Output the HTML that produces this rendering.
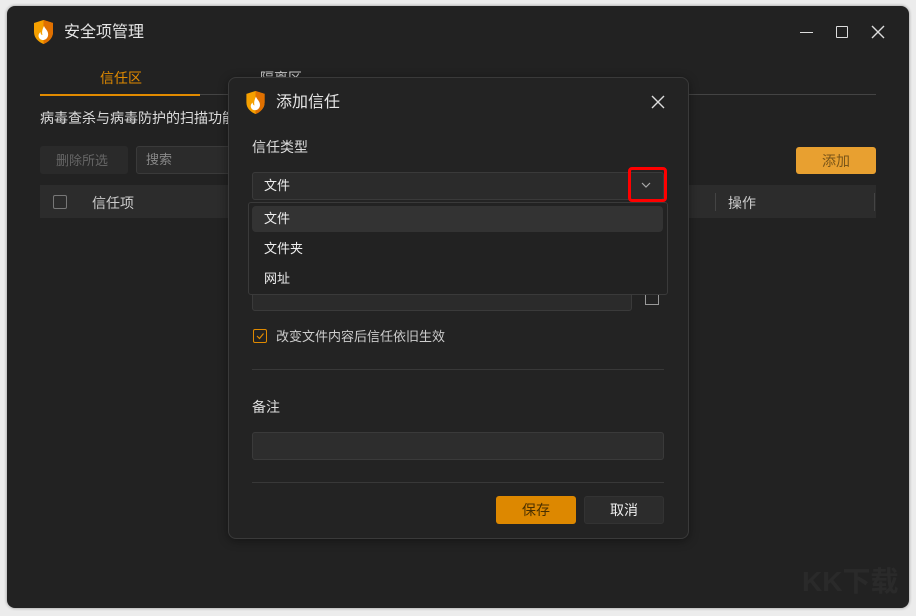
<!DOCTYPE html>
<html><head><meta charset="utf-8"><style>
*{margin:0;padding:0;box-sizing:border-box}
body{width:916px;height:616px;background:#ececec;font-family:"Liberation Sans","Noto Sans CJK SC",sans-serif;position:relative;overflow:hidden}
.a{position:absolute}
.win{left:7px;top:6px;width:902px;height:602px;background:#222;border-radius:8px;box-shadow:0 0 3px rgba(0,0,0,.4)}
.t{white-space:nowrap;line-height:1}
</style></head><body>
<div class="a win"></div>
<svg class="a" style="left:34px;top:20px" width="19" height="24" viewBox="0 0 19 24"><path d="M9.5 0L19 3v9c0 6-4.5 10-9.5 12C4.5 22 0 18 0 12V3z" fill="#f5a000"/><path d="M9.5 0L19 3v9c0 6-4.5 10-9.5 12z" fill="#e07000"/><path d="M10 6c1 3 5 5 4 10-1 3-3 4-5 4s-4-1-4.5-4c0-2 1-3 2-4 0 2 1 3 2 3-1-3 0-6 1.5-9z" fill="#fff"/></svg>
<div class="a t" style="left:64px;top:25px;font-size:16px;color:#e6e6e6">安全项管理</div>
<div class="a" style="left:800px;top:32px;width:13px;height:1px;background:#ddd"></div>
<div class="a" style="left:836px;top:26px;width:12px;height:12px;border:1.5px solid #ddd;border-radius:1px"></div>
<svg class="a" style="left:871px;top:25px" width="14" height="14"><path d="M1 1L13 13M13 1L1 13" stroke="#ddd" stroke-width="1.4"/></svg>
<div class="a t" style="left:100px;top:71px;font-size:14px;color:#e08a00">信任区</div>
<div class="a t" style="left:260px;top:71px;font-size:14px;color:#ccc">隔离区</div>
<div class="a" style="left:40px;top:94px;width:836px;height:1px;background:#444"></div>
<div class="a" style="left:40px;top:94px;width:160px;height:2px;background:#e08a00"></div>
<div class="a t" style="left:40px;top:111px;font-size:14px;color:#ddd">病毒查杀与病毒防护的扫描功能</div>
<div class="a" style="left:40px;top:146px;width:88px;height:28px;background:#2a2a2a;border-radius:3px"></div>
<div class="a t" style="left:56px;top:154px;font-size:13px;color:#666">删除所选</div>
<div class="a" style="left:136px;top:146px;width:120px;height:28px;background:#2b2b2b;border:1px solid #3a3a3a;border-radius:3px"></div>
<div class="a t" style="left:146px;top:153px;font-size:13px;color:#888">搜索</div>
<div class="a" style="left:796px;top:147px;width:80px;height:27px;background:#e8a030;border-radius:3px"></div>
<div class="a t" style="left:822px;top:154px;font-size:14px;color:#7a5518">添加</div>
<div class="a" style="left:40px;top:185px;width:836px;height:33px;background:#2c2c2c"></div>
<div class="a" style="left:53px;top:195px;width:14px;height:14px;border:1px solid #777;border-radius:2px"></div>
<div class="a t" style="left:92px;top:196px;font-size:14px;color:#ccc">信任项</div>
<div class="a" style="left:715px;top:193px;width:1px;height:18px;background:#444"></div>
<div class="a" style="left:874px;top:193px;width:1px;height:18px;background:#444"></div>
<div class="a t" style="left:728px;top:196px;font-size:14px;color:#ccc">操作</div>
<div class="a" style="left:228px;top:77px;width:461px;height:462px;background:#232323;border:1px solid #3a3a3a;border-radius:8px;box-shadow:0 2px 10px rgba(0,0,0,.4)"></div>
<svg class="a" style="left:246px;top:91px" width="19" height="23" viewBox="0 0 19 24"><path d="M9.5 0L19 3v9c0 6-4.5 10-9.5 12C4.5 22 0 18 0 12V3z" fill="#f5a000"/><path d="M9.5 0L19 3v9c0 6-4.5 10-9.5 12z" fill="#e07000"/><path d="M10 6c1 3 5 5 4 10-1 3-3 4-5 4s-4-1-4.5-4c0-2 1-3 2-4 0 2 1 3 2 3-1-3 0-6 1.5-9z" fill="#fff"/></svg>
<div class="a t" style="left:276px;top:95px;font-size:16px;color:#e6e6e6">添加信任</div>
<svg class="a" style="left:651px;top:95px" width="14" height="14"><path d="M1 1L13 13M13 1L1 13" stroke="#ddd" stroke-width="1.4"/></svg>
<div class="a t" style="left:252px;top:140px;font-size:14px;color:#ddd">信任类型</div>
<div class="a" style="left:252px;top:172px;width:412px;height:28px;background:#2b2b2b;border:1px solid #3a3a3a;border-radius:3px"></div>
<div class="a t" style="left:264px;top:179px;font-size:13px;color:#eee">文件</div>
<svg class="a" style="left:641px;top:182px" width="10" height="7"><path d="M1 1L5 5L9 1" stroke="#aaa" fill="none" stroke-width="1.2"/></svg>
<div class="a" style="left:628px;top:167px;width:39px;height:35px;border:3px solid #f00;border-radius:4px"></div>
<div class="a" style="left:252px;top:270px;width:380px;height:41px;background:#2b2b2b;border:1px solid #3a3a3a;border-radius:3px"></div>
<div class="a" style="left:645px;top:293px;width:14px;height:12px;border:1.5px solid #999"></div>
<div class="a" style="left:248px;top:202px;width:420px;height:93px;background:#222;border:1px solid #3a3a3a;border-radius:3px"></div>
<div class="a" style="left:252px;top:206px;width:411px;height:26px;background:#333;border-radius:4px"></div>
<div class="a t" style="left:264px;top:212px;font-size:13px;color:#eee">文件</div>
<div class="a t" style="left:264px;top:242px;font-size:13px;color:#eee">文件夹</div>
<div class="a t" style="left:264px;top:272px;font-size:13px;color:#eee">网址</div>
<div class="a" style="left:253px;top:329px;width:14px;height:14px;border:1px solid #e08a00;border-radius:2px"></div>
<svg class="a" style="left:255px;top:331px" width="10" height="10"><path d="M2 5L4.5 7.5L8.5 2.5" stroke="#e08a00" fill="none" stroke-width="1.2"/></svg>
<div class="a t" style="left:276px;top:330px;font-size:13px;color:#ccc">改变文件内容后信任依旧生效</div>
<div class="a" style="left:252px;top:369px;width:412px;height:1px;background:#383838"></div>
<div class="a t" style="left:252px;top:400px;font-size:14px;color:#ddd">备注</div>
<div class="a" style="left:252px;top:432px;width:412px;height:28px;background:#2d2d2d;border:1px solid #3a3a3a;border-radius:3px"></div>
<div class="a" style="left:252px;top:482px;width:412px;height:1px;background:#383838"></div>
<div class="a" style="left:496px;top:496px;width:80px;height:28px;background:#dd8800;border-radius:3px"></div>
<div class="a t" style="left:522px;top:503px;font-size:14px;color:#4a3000">保存</div>
<div class="a" style="left:584px;top:496px;width:80px;height:28px;background:#2c2c2c;border:1px solid #333;border-radius:3px"></div>
<div class="a t" style="left:610px;top:503px;font-size:14px;color:#eee">取消</div>
<div class="a t" style="left:802px;top:568px;font-size:28px;font-weight:bold;color:rgba(255,255,255,.04)">KK下载</div>
</body></html>
